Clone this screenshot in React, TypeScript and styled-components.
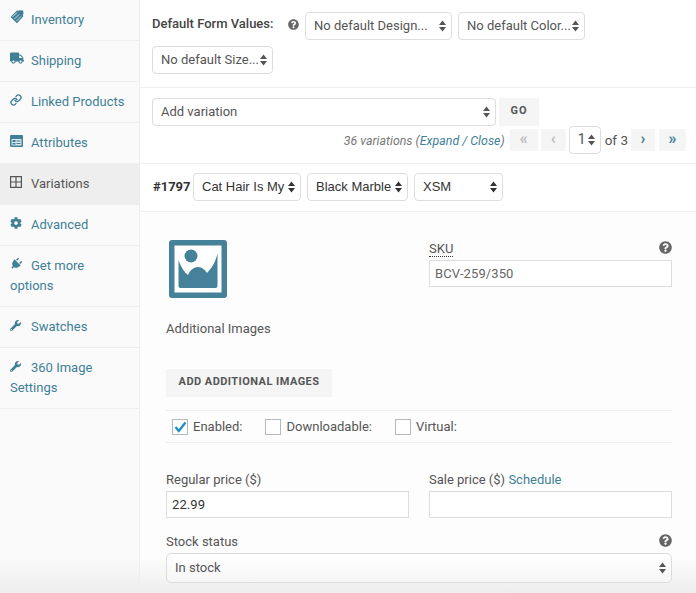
import React from "react";
import styled, { createGlobalStyle, css } from "styled-components";
import { FaTruck, FaCog, FaPlug, FaWrench, FaQuestionCircle } from "react-icons/fa";
import { Link as LinkGlyph } from "lucide-react";

const Global = createGlobalStyle`
  html, body { margin: 0; padding: 0; background: #fff; }
  body { font-family: Roboto, "Liberation Sans", sans-serif; font-size: 13px; color: #555; overflow: hidden; }
  * { box-sizing: border-box; }
`;

const bottomFade = (base: string) => css`
  background: linear-gradient(to bottom, ${base} calc(100% - 36px), #ededed 100%);
`;

const Page = styled.div`
  display: flex;
  width: 696px;
  height: 593px;
  overflow: hidden;
`;
const Sidebar = styled.nav`
  flex: 0 0 140px;
  height: 593px;
  ${bottomFade("#fafafa")}
  border-right: 1px solid #eee;
`;
const Tab = styled.a<{ $active?: boolean }>`
  display: block;
  padding: 10px;
  min-height: 41px;
  line-height: 20px;
  font-size: 13px;
  color: ${(p) => (p.$active ? "#555" : "#3f7f97")};
  background: ${(p) => (p.$active ? "#eee" : "transparent")};
  border-bottom: 1px solid #eee;
`;
const TabIcon = styled.span`
  display: inline-flex;
  width: 21px;
  height: 14px;
  vertical-align: 0;
  align-items: center;
  svg { display: block; margin-top: -2px; }
`;
const PlugGlyph = styled(FaPlug)`
  transform: rotate(45deg);
`;
const Main = styled.main`
  flex: 1;
  min-width: 0;
`;
const DefaultsSection = styled.section`
  height: 88px;
  padding: 12px 10px 0 12px;
  border-bottom: 1px solid #eee;
  display: flex;
  flex-wrap: wrap;
  align-content: flex-start;
  gap: 6px;
`;
const DefaultsLabel = styled.strong`
  font-size: 13px;
  font-weight: 500;
  line-height: 24px;
  color: #444;
  width: 122px;
  white-space: nowrap;
`;
const Help = styled.span`
  display: inline-flex;
  color: #666;
`;
const HelpSlot = styled.span`
  display: flex;
  align-items: center;
  width: 19px;
  padding-left: 8px;
  height: 25px;
`;
const SelectBox = styled.div<{ $w?: number; $h?: number; $plain?: boolean }>`
  position: relative;
  flex: ${(p) => (p.$w ? `0 0 ${p.$w}px` : "1")};
  width: ${(p) => (p.$w ? `${p.$w}px` : "100%")};
  height: ${(p) => p.$h ?? 28}px;
  padding: 0 14px 0 8px;
  background: #fff;
  border: 1px solid #ddd;
  border-radius: 4px;
  line-height: ${(p) => (p.$h ?? 28) - 3}px;
  font-size: 13px;
  font-family: ${(p) => (p.$plain ? '"Liberation Sans", Arial, sans-serif' : "Roboto, sans-serif")};
  color: ${(p) => (p.$plain ? "#333" : "#555")};
  white-space: nowrap;
  overflow: hidden;
`;
const ArrowWrap = styled.svg`
  position: absolute;
  right: 5px;
  top: 50%;
  margin-top: -6px;
  width: 7px;
  height: 12px;
`;
const Arrows = ({ c = "#555" }: { c?: string }) => (
  <ArrowWrap viewBox="0 0 7 12">
    <path d="M3.5 0.5 7 5H0zM3.5 11.5 0 7h7z" fill={c} />
  </ArrowWrap>
);
const VariationsSection = styled.section`
  height: 76px;
  padding: 10px 10px 0 12px;
  border-bottom: 1px solid #eee;
`;
const AddRow = styled.div`
  display: flex;
  gap: 3px;
  height: 28px;
`;
const GoButton = styled.div`
  width: 40px;
  height: 28px;
  background: #f5f5f5;
  text-align: center;
  font-size: 11px;
  font-weight: 700;
  letter-spacing: 1px;
  line-height: 25px;
  color: #555;
`;
const PagerRow = styled.div`
  display: flex;
  justify-content: flex-end;
  align-items: center;
  height: 28px;
`;
const Count = styled.span`
  font-style: italic;
  font-size: 12.4px;
  color: #777;
  margin-right: 5px;
  white-space: nowrap;
`;
const Link = styled.a`
  color: #3f7f97;
`;
const PageBtn = styled.span<{ $w: number; $off?: boolean; $ml?: number }>`
  width: ${(p) => p.$w}px;
  height: 22px;
  margin-left: ${(p) => p.$ml ?? 0}px;
  background: #f5f5f5;
  text-align: center;
  font-size: 16px;
  font-weight: 700;
  line-height: 19px;
  color: ${(p) => (p.$off ? "#bbb" : "#3f7f97")};
`;
const OfText = styled.span`
  font-size: 13.5px;
  color: #555;
  margin: 0 3px 0 4px;
`;
const PageSelect = styled(SelectBox)`
  flex: 0 0 32px;
  margin-left: 3px;
  padding: 0 0 0 8px;
  font-size: 14px;
`;
const ItemHeader = styled.div`
  height: 48px;
  padding: 9px 0 0 13px;
  border-bottom: 1px solid #eee;
  display: flex;
  align-items: flex-start;
  gap: 6px;
`;
const ItemId = styled.strong`
  font-size: 13px;
  font-weight: 700;
  line-height: 28px;
  color: #333;
  width: 34px;
  font-family: Roboto, sans-serif;
`;
const Body = styled.div`
  padding: 0 24px 0 26px;
  height: 381px;
  ${bottomFade("#fdfdfd")}
`;
const TopRow = styled.div`
  display: grid;
  grid-template-columns: 263px 243px;
  height: 198px;
`;
const ImageCol = styled.div`
  padding-top: 28px;
`;
const ImageIcon = styled.svg`
  display: block;
  width: 58px;
  height: 58px;
  margin-left: 3px;
`;
const Plain = styled.div`
  font-size: 13px;
  line-height: 20px;
  margin-top: 21px;
  color: #555;
`;
const AddImages = styled.div`
  width: 166px;
  height: 28px;
  margin-top: 30px;
  background: #f5f5f5;
  text-align: center;
  font-size: 11px;
  font-weight: 700;
  letter-spacing: 0.45px;
  line-height: 25px;
  color: #555;
`;
const SkuCol = styled.div`
  padding-top: 28px;
`;
const LabelRow = styled.div`
  display: flex;
  justify-content: space-between;
  align-items: flex-start;
  height: 20px;
  padding-top: 1px;
  line-height: 16px;
  font-size: 13px;
  color: #555;
`;
const Abbr = styled.span`
  border-bottom: 1px dotted #333;
  line-height: 15px;
  height: 16px;
`;
const TextInput = styled.div<{ $dark?: boolean }>`
  height: 27px;
  background: #fff;
  border: 1px solid #ddd;
  padding-left: 5px;
  font-size: 13px;
  line-height: 25px;
  letter-spacing: 0.1px;
  color: ${(p) => (p.$dark ? "#333" : "#666")};
`;
const Options = styled.div`
  height: 33px;
  border-top: 1px solid #eee;
  border-bottom: 1px solid #eee;
  display: flex;
  align-items: center;
  padding-left: 6px;
`;
const Check = styled.span`
  display: flex;
  align-items: center;
  margin-right: 23px;
  font-size: 13px;
  color: #555;
  gap: 5px;
`;
const Box = styled.span`
  position: relative;
  width: 16px;
  height: 16px;
  border: 1px solid #b4b9be;
  background: #fff;
  svg { position: absolute; left: 0; top: 0; }
`;
const PriceRow = styled.div`
  display: grid;
  grid-template-columns: 243px 243px;
  column-gap: 20px;
  margin-top: 28px;
`;
const StockBlock = styled.div`
  margin-top: 15px;
`;
const StockSelect = styled(SelectBox)`
  border-radius: 5px;
  background: linear-gradient(to bottom, #fff, #f6f6f6);
`;

const Q = () => (
  <Help>
    <FaQuestionCircle size={13} />
  </Help>
);
const SmallQ = () => (
  <Help>
    <FaQuestionCircle size={11} />
  </Help>
);

const TagIcon = () => (
  <svg width="14" height="14" viewBox="0 0 14 14">
    <path d="M0.5 7 7 0.5l2 .3 .6-.6 3.6 .3 .3 3.4-.6 .6 .3 2L7 13.2z" fill="#3f7f97" />
    <path d="M2.5 7 7 2.5M4.5 9 9 4.5M6.5 11 11 6.5" stroke="#cfe0e6" strokeWidth="1" />
  </svg>
);
const CardIcon = () => (
  <svg width="13" height="12" viewBox="0 0 13 12">
    <path d="M0 1.2C0 .5 .5 0 1.2 0h10.6c.7 0 1.2 .5 1.2 1.2v9.6c0 .7-.5 1.2-1.2 1.2H1.2C.5 12 0 11.5 0 10.8z" fill="#3f7f97" />
    <rect x="1.5" y="4" width="10" height="6.5" fill="#dbe7ec" />
    <rect x="2.5" y="5" width="3" height="2" fill="#3f7f97" />
    <rect x="2.5" y="8" width="3" height="1.5" fill="#3f7f97" />
    <rect x="6.5" y="5.5" width="4" height="1" fill="#3f7f97" />
    <rect x="6.5" y="8" width="4" height="1" fill="#3f7f97" />
  </svg>
);
const GridIcon = () => (
  <svg width="12" height="12" viewBox="0 0 12 12">
    <path d="M.6 .6h10.8v10.8H.6zM.6 6h10.8M6 .6v10.8" stroke="#555" strokeWidth="1.2" fill="none" />
  </svg>
);

const tabs: { label: string; icon: React.ReactNode; active?: boolean }[] = [
  { label: "Inventory", icon: <TagIcon /> },
  { label: "Shipping", icon: <FaTruck size={14} /> },
  { label: "Linked Products", icon: <LinkGlyph size={12} strokeWidth={2.6} /> },
  { label: "Attributes", icon: <CardIcon /> },
  { label: "Variations", icon: <GridIcon />, active: true },
  { label: "Advanced", icon: <FaCog size={12} /> },
  { label: "Get more options", icon: <PlugGlyph size={12} /> },
  { label: "Swatches", icon: <FaWrench size={11} /> },
  { label: "360 Image Settings", icon: <FaWrench size={11} /> },
];

export default function App() {
  return (
    <Page>
      <Global />
      <Sidebar>
        {tabs.map((t) => (
          <Tab key={t.label} $active={t.active}>
            <TabIcon>{t.icon}</TabIcon>
            {t.label}
          </Tab>
        ))}
      </Sidebar>
      <Main>
        <DefaultsSection>
          <DefaultsLabel>Default Form Values:</DefaultsLabel>
          <HelpSlot>
            <SmallQ />
          </HelpSlot>
          <SelectBox $w={147}>
            No default Design...
            <Arrows />
          </SelectBox>
          <SelectBox $w={127}>
            No default Color...
            <Arrows />
          </SelectBox>
          <SelectBox $w={121}>
            No default Size...
            <Arrows />
          </SelectBox>
        </DefaultsSection>
        <VariationsSection>
          <AddRow>
            <SelectBox $w={344}>
              Add variation
              <Arrows />
            </SelectBox>
            <GoButton>GO</GoButton>
          </AddRow>
          <PagerRow>
            <Count>
              36 variations (<Link>Expand / Close</Link>)
            </Count>
            <PageBtn $w={28} $off>«</PageBtn>
            <PageBtn $w={25} $off $ml={3}>‹</PageBtn>
            <PageSelect $w={32}>
              1
              <Arrows />
            </PageSelect>
            <OfText>of 3</OfText>
            <PageBtn $w={24}>›</PageBtn>
            <PageBtn $w={27} $ml={4}>»</PageBtn>
          </PagerRow>
        </VariationsSection>
        <ItemHeader>
          <ItemId>#1797</ItemId>
          <SelectBox $w={108} $plain>
            Cat Hair Is My
            <Arrows c="#333" />
          </SelectBox>
          <SelectBox $w={101} $plain>
            Black Marble
            <Arrows c="#333" />
          </SelectBox>
          <SelectBox $w={89} $plain>
            XSM
            <Arrows c="#333" />
          </SelectBox>
        </ItemHeader>
        <Body>
          <TopRow>
            <ImageCol>
              <ImageIcon viewBox="0 0 58 58">
                <rect width="58" height="58" rx="3" fill="#45829a" />
                <rect x="5.5" y="5.5" width="47" height="47" fill="#fff" />
                <circle cx="22" cy="16" r="6.5" fill="#45829a" />
                <path d="M9.5 20C12 27 15 32 19 35 21 30 25 27 29 27 33 27 36 30 38 33 43 28 47 21 48.5 13V46Q48.5 48 46.5 48H11.5Q9.5 48 9.5 46Z" fill="#45829a" />
              </ImageIcon>
              <Plain>Additional Images</Plain>
              <AddImages>ADD ADDITIONAL IMAGES</AddImages>
            </ImageCol>
            <SkuCol>
              <LabelRow>
                <Abbr>SKU</Abbr>
                <Q />
              </LabelRow>
              <TextInput>BCV-259/350</TextInput>
            </SkuCol>
          </TopRow>
          <Options>
            <Check>
              <Box>
                <svg width="14" height="14" viewBox="0 0 14 14">
                  <path d="M2.5 7 5.8 11 12.5 2.5" stroke="#1e8cbe" strokeWidth="2.3" fill="none" />
                </svg>
              </Box>
              Enabled:
            </Check>
            <Check>
              <Box />
              Downloadable:
            </Check>
            <Check>
              <Box />
              Virtual:
            </Check>
          </Options>
          <PriceRow>
            <div>
              <LabelRow>Regular price ($)</LabelRow>
              <TextInput $dark>22.99</TextInput>
            </div>
            <div>
              <LabelRow>
                <span>
                  Sale price ($) <Link>Schedule</Link>
                </span>
              </LabelRow>
              <TextInput />
            </div>
          </PriceRow>
          <StockBlock>
            <LabelRow>
              Stock status
              <Q />
            </LabelRow>
            <StockSelect $h={30}>
              In stock
              <Arrows />
            </StockSelect>
          </StockBlock>
        </Body>
      </Main>
    </Page>
  );
}
